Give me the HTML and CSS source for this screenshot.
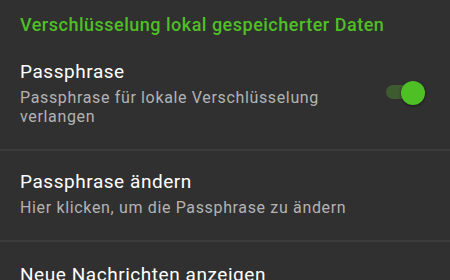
FILE: index.html
```html
<!DOCTYPE html>
<html>
<head>
<meta charset="utf-8">
<link rel="stylesheet" href="styles.css">
</head>
<body>
<div class="screen">
  <div class="category">Verschlüsselung lokal gespeicherter Daten</div>
  <div class="pref pref-first">
    <div class="pref-text">
      <div class="pref-title">Passphrase</div>
      <div class="pref-summary">Passphrase für lokale Verschlüsselung verlangen</div>
    </div>
    <div class="switch">
      <div class="switch-track"></div>
      <div class="switch-thumb"></div>
    </div>
  </div>
  <div class="divider"></div>
  <div class="pref pref-second">
    <div class="pref-text">
      <div class="pref-title">Passphrase ändern</div>
      <div class="pref-summary">Hier klicken, um die Passphrase zu ändern</div>
    </div>
  </div>
  <div class="divider"></div>
  <div class="pref pref-third">
    <div class="pref-text">
      <div class="pref-title">Neue Nachrichten anzeigen</div>
    </div>
  </div>
</div>
</body>
</html>
```

FILE: styles.css
```css
html, body {
  margin: 0;
  padding: 0;
  background: #303030;
}
.screen {
  width: 450px;
  height: 280px;
  overflow: hidden;
  font-family: Roboto, "Noto Sans", sans-serif;
  background: #303030;
}
.category {
  color: #4fbf26;
  font-size: 18px;
  font-weight: 500;
  letter-spacing: 0.5px;
  line-height: 24px;
  padding: 13px 20px 0 20px;
  height: 24px;
  white-space: nowrap;
}
.pref {
  display: flex;
  align-items: flex-start;
  padding: 0 20px;
}
.pref-first {
  padding-top: 22.5px;
  padding-bottom: 23.3px;
}
.pref-second {
  padding-top: 18.8px;
  padding-bottom: 23px;
}
.pref-third {
  padding-top: 20.8px;
}
.pref-text {
  flex: 1;
  min-width: 0;
}
.pref-title {
  color: #ffffff;
  font-size: 19px;
  letter-spacing: 0.55px;
  line-height: 24px;
  white-space: nowrap;
}
.pref-summary {
  color: #b3b3b3;
  font-size: 16px;
  letter-spacing: 0.65px;
  line-height: 19px;
  margin-top: 4.2px;
}
.divider {
  height: 2px;
  background: #3b3b3b;
}
.switch {
  position: relative;
  flex: none;
  width: 40px;
  height: 24px;
  margin-left: 16px;
  margin-right: 4px;
  margin-top: 21.5px;
}
.switch-track {
  position: absolute;
  left: 0;
  top: 4px;
  width: 34px;
  height: 14px;
  border-radius: 7px;
  background: #3d5a30;
}
.switch-thumb {
  position: absolute;
  left: 15px;
  top: 0;
  width: 24px;
  height: 24px;
  border-radius: 50%;
  background: #4fbf26;
  box-shadow: 0 1px 3px rgba(0, 0, 0, 0.5);
}
```
